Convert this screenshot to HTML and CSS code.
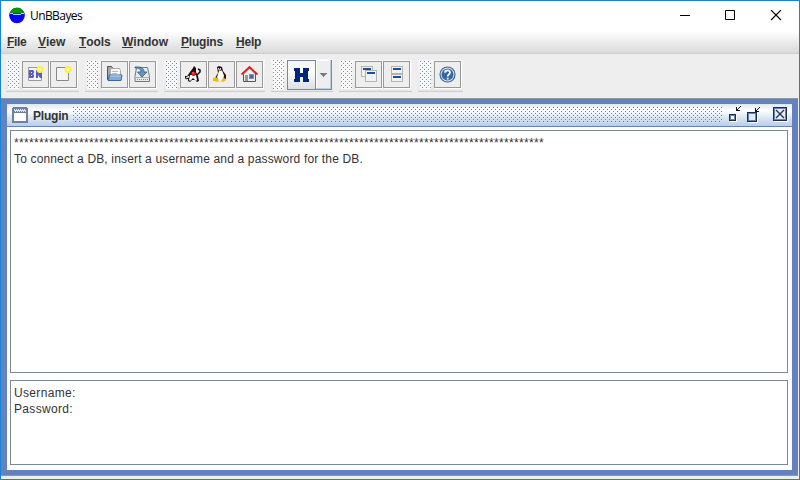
FILE: index.html
```html
<!DOCTYPE html>
<html lang="en">
<head>
<meta charset="utf-8">
<title>UnBBayes</title>
<link rel="stylesheet" href="styles.css">
</head>
<body>
<svg class="defs" width="0" height="0"><defs>
  <pattern id="bumps-grey" width="4" height="4" patternUnits="userSpaceOnUse"><path d="M0 0h1v1H0zM2 2h1v1H2z" fill="#7a8a99"/></pattern>
  <pattern id="bumps-blue" width="4" height="4" patternUnits="userSpaceOnUse"><path d="M0 0h1v1H0zM2 2h1v1H2z" fill="#5479cc"/></pattern>
</defs></svg>
<div class="window">
  <header class="titlebar">
    <svg class="logo" width="18" height="18" viewBox="0 0 18 18"><circle cx="8" cy="8.500" r="7.800" fill="#00f"/><path d="M.9 6.500C2 2.500 4.500.7 8 .7s6 1.800 7.100 5.800z" fill="#009a00"/><path d="M1 6.500h3M12 6.500h3M4 7.500h8" fill="none" stroke="#e0f8ff" stroke-width=".8"/></svg>
    <span class="app-name">UnBBayes</span>
    <svg class="controls" width="104" height="12" viewBox="0 0 104 12"><path d="M0 5.500h10" stroke="#000"/><path d="M45.500.5h9v9h-9z" fill="none" stroke="#000"/><path d="M91 0l10 10M101 0L91 10" stroke="#000" stroke-width="1.100"/></svg>
  </header>
  <nav class="menubar">
    <span class="m-file"><u>F</u>ile</span><span class="m-view"><u>V</u>iew</span><span class="m-tools"><u>T</u>ools</span><span class="m-window"><u>W</u>indow</span><span class="m-plugins"><u>P</u>lugins</span><span class="m-help"><u>H</u>elp</span>
  </nav>
  <div class="toolbars">
    <div class="toolbar">
      <svg class="grip"><rect width="100%" height="100%" fill="url(#bumps-grey)"/></svg>
      <button><svg width="17" height="17" viewBox="0 0 17 17"><path d="M1.500 1.500h13v13h-13z" fill="#f5f5f3" stroke="#999"/><path d="M2 4h4l1 1v2L6 8l1 1v2l-1 1H2zM9 4h2l2 3V4h2v8h-2l-2-3v3H9z" fill="#5c5ad0"/><path d="M4 6h1v1H4zM4 9h1v1H4z" fill="#fff"/><circle cx="13" cy="3.500" r="3.500" fill="#ffef3c"/><circle cx="13" cy="3.500" r="1.500" fill="#fffbb0"/></svg></button>
      <button><svg width="17" height="17" viewBox="0 0 17 17"><path d="M1.500 1.500h12v13h-12z" fill="#f4f4f2" stroke="#888"/><circle cx="13" cy="3.500" r="3.500" fill="#ffef3c"/><circle cx="13" cy="3.500" r="1.500" fill="#fffbb0"/></svg></button>
    </div>
    <div class="toolbar">
      <svg class="grip"><rect width="100%" height="100%" fill="url(#bumps-grey)"/></svg>
      <button><svg width="17" height="17" viewBox="0 0 17 17"><path d="M1.500 13.500v-13h4l1.500 2h3v10z" fill="#a8a8a4" stroke="#555"/><path d="M4.500 2.500h9l1 2v6h-10z" fill="#f8f8f8" stroke="#aaa"/><path d="M6 5.500h6M6 7.500h5" stroke="#bbb"/><path d="M3.500 9h12.500l-1 5.500H2z" fill="#82abd7" stroke="#3569a5"/><path d="M4 10h11" stroke="#bed5ed"/></svg></button>
      <button><svg width="17" height="17" viewBox="0 0 17 17"><path d="M2.500 1.500h11l2 9v5H1v-5z" fill="#e9e9e7" stroke="#777"/><path d="M1.500 11.500h14" stroke="#aaa"/><path d="M3 13.500h11" stroke="#888" stroke-dasharray="1 1"/><path d="M1 1c5-.5 9 .5 9 5h3L8 11 3.500 6H7c0-3-2-4-6-4z" fill="#6598bd" stroke="#285e87" stroke-width=".8"/></svg></button>
    </div>
    <div class="toolbar">
      <svg class="grip"><rect width="100%" height="100%" fill="url(#bumps-grey)"/></svg>
      <button><svg width="17" height="17" viewBox="0 0 17 17"><path d="M9 0l2 2v4l2 4 1 5-2 1-2-2H7l-2 2-2-1V9L5 6l3-4z" fill="#111"/><path d="M5 9h6l1 5-1 1-3-3-3 3-1-1z" fill="#fff"/><path d="M4 9L1 11l-1-1 1 3 3-1" fill="#eee" stroke="#111"/><path d="M12 9l3-3V4l-2-1" fill="none" stroke="#111" stroke-width="1.500"/><circle cx="8.500" cy="7.800" r="2.300" fill="#e61414"/><circle cx="8" cy="7" r=".7" fill="#ff9b91"/></svg></button>
      <button><svg width="17" height="17" viewBox="0 0 17 17"><path d="M4 1l2-1 3 1 1 4 3 4v4l-3 1H4L2.500 11 5 7z" fill="#181818"/><path d="M6 5l3-.5 2 5-1 5H5.500L4 11z" fill="#fff"/><path d="M5 2h1v1H5zM7 2h1v1H7z" fill="#ddd"/><path d="M5 3h3v1L6 5zM0 12l3-1 3 3-1 2-5-1zM9 13l2-1 2 1v1l-3 2-2-.5z" fill="#f8b914"/></svg></button>
      <button><svg width="17" height="17" viewBox="0 0 17 17"><path d="M2.500 8L8.500 2l6 6v7.500h-12z" fill="#efeeea" stroke="#555"/><path d="M4 9h3v6H4z" fill="#999990"/><path d="M8.500 8.500h4v4h-4z" fill="#416db1" stroke="#888"/><path d="M.5 8.500L8.500 1l8 7.500" fill="none" stroke="#df171e" stroke-width="1.700"/></svg></button>
    </div>
    <div class="toolbar split">
      <svg class="grip"><rect width="100%" height="100%" fill="url(#bumps-grey)"/></svg>
      <button class="primary"><svg width="15" height="14" viewBox="0 0 15 14" shape-rendering="crispEdges"><path d="M0 0h6v5h3V0h6v3h-1v8h1v3H9V9H6v5H0v-3h1V3H0z" fill="#00247b"/></svg></button><button class="drop"><svg width="7" height="4" viewBox="0 0 7 4" shape-rendering="crispEdges"><path d="M0 0h7v1H6v1H5v1H4v1H3V3H2V2H1V1H0z" fill="#6f7f8f"/></svg></button>
    </div>
    <div class="toolbar">
      <svg class="grip"><rect width="100%" height="100%" fill="url(#bumps-grey)"/></svg>
      <button><svg width="17" height="17" viewBox="0 0 17 17" shape-rendering="crispEdges"><path d="M1.500.5h11v10h-11z" fill="#f2f2f0" stroke="#b4b4ac"/><path d="M3 2h8v2H3z" fill="#1f4f9c"/><path d="M5.500 4.500h11v11h-11z" fill="#f2f2f0" stroke="#b4b4ac"/><path d="M7 6h8v2H7z" fill="#1f4f9c"/></svg></button>
      <button><svg width="17" height="17" viewBox="0 0 17 17" shape-rendering="crispEdges"><path d="M3.500.5h11v7h-11zM3.500 8.500h11v7h-11z" fill="#f2f2f0" stroke="#b4b4ac"/><path d="M5 2h8v2H5zM5 10h8v2H5z" fill="#1f4f9c"/></svg></button>
    </div>
    <div class="toolbar">
      <svg class="grip"><rect width="100%" height="100%" fill="url(#bumps-grey)"/></svg>
      <button><svg width="17" height="17" viewBox="0 0 17 17"><circle cx="8.500" cy="8.500" r="7.500" fill="#e5edf5" stroke="#416796" stroke-width="1.200"/><circle cx="8.500" cy="8.500" r="6" fill="#3969a5"/><path d="M6 6.700C6 3.500 11 3.600 11 6.500c0 2-2.300 1.800-2.300 4M8.700 11.700v1.700" fill="none" stroke="#fff" stroke-width="1.800"/></svg></button>
    </div>
  </div>
  <main class="desktop">
    <section class="frame">
      <header class="frame-title">
        <svg width="16" height="16" viewBox="0 0 16 16" shape-rendering="crispEdges"><rect x="1" y="1" width="14" height="14" fill="#fff" stroke="#6f8294" stroke-width="2"/><path d="M2 2h12v3H2z" fill="#dde8f3"/><path d="M3 2.500h11M2 4.500h11" stroke="#6382bf" stroke-dasharray="1 1"/><path d="M2 5.500h12" stroke="#6f8294"/><path d="M0 0h1v1H0zM15 0h1v1h-1z" fill="#dde8f3"/></svg>
        <span class="frame-name">Plugin</span>
        <svg class="dots"><rect width="100%" height="100%" fill="url(#bumps-blue)"/></svg>
        <svg class="frame-controls" width="60" height="17" viewBox="0 0 60 17" shape-rendering="crispEdges"><path d="M2 15.500h7M8.500 9v7M20 16.500h10M29.500 7v9M46 15.500h14M59.500 2v14" stroke="#fff"/><path d="M1.500 8.500h6v6h-6z" fill="#fff" stroke="#222c40"/><path d="M2.500 9.500h4v4h-4z" fill="none" stroke="#6382bf"/><path d="M19.500 6.500h9v9h-9z" fill="#e4edf6" stroke="#222c40"/><path d="M20.500 7.500h7v7h-7z" fill="none" stroke="#6382bf"/><path d="M8 1h1v3h3v1H8zM9 3h1v1H9zM10 2h1v1h-1zM11 1h1v1h-1zM12 0h1v1h-1zM27 2h1v3h3v1h-4zM28 4h1v1h-1zM29 3h1v1h-1zM30 2h1v1h-1zM31 1h1v1h-1z" fill="#111"/><path d="M45.500 1.500h13v13h-13z" fill="#e4edf6" stroke="#222c40"/><path d="M46.500 2.500h11v11h-11z" fill="none" stroke="#6382bf"/><path d="M48 4l8 8M56 4l-8 8" stroke="#233050" stroke-width="1.300" shape-rendering="auto"/></svg>
      </header>
      <div class="frame-body">
        <div class="pane log"><p class="stars">**********************************************************************************************************</p><p class="message">To connect a DB, insert a username and a password for the DB.</p></div>
        <div class="pane form"><p>Username:</p><p>Password:</p></div>
      </div>
    </section>
  </main>
</div>
</body>
</html>
```
FILE: styles.css
```css
* { box-sizing: border-box; }
body { margin: 0; overflow: hidden; font: 12px/16px "Liberation Sans", Arial, sans-serif; color: #333; }
p { margin: 0; white-space: pre; }
svg { display: block; flex: none; }
.window { width: 800px; height: 480px; border: 1px solid #1883d7; background: #eee; display: flex; flex-direction: column; }

.titlebar { height: 30px; background: #fff; display: flex; align-items: flex-start; padding: 6px 15px 0 8px; flex: none; }
.app-name { margin: 1px auto 0 3px; font: 12px/16px "Open Sans", sans-serif; color: #000; letter-spacing: -.58px; }
.controls { margin-top: 3px; }

.menubar { height: 23px; flex: none; background: linear-gradient(#fff, #dadada); border-bottom: 1px solid #ccc; display: flex; padding: 3px 0 0 6px; font-weight: bold; }
.menubar u { text-decoration: none; display: inline-block; height: 14px; line-height: 16px; border-bottom: 1px solid #333; }
.m-file { width: 31px; letter-spacing: -.3px; }
.m-view { width: 41px; }
.m-tools { width: 43px; letter-spacing: -.1px; }
.m-window { width: 59px; }
.m-plugins { width: 55px; letter-spacing: -.2px; }
.m-help { letter-spacing: -.2px; }

.toolbars { height: 44px; flex: none; display: flex; gap: 6px; padding: 6px 0 0 5px; }
.toolbar { height: 32px; border-bottom: 1px solid #ccc; background: linear-gradient(#f7f7f7, #e8e8e8); display: flex; align-items: flex-start; gap: 1px; padding: 1px 2px 0; }
.grip { width: 11px; height: 28px; margin-right: 2px; background: #fafafa; }
.toolbar button { width: 27px; height: 27px; padding: 0; border: 1px solid #999; background: #eee; box-shadow: 1px 1px #fff; display: flex; align-items: center; justify-content: center; }
.split { height: 33px; margin-top: -1px; gap: 0; padding-right: 1px; }
.split .grip { height: 30px; margin-right: 3px; }
.toolbar .primary { width: 29px; height: 30px; border-color: #7a8a99; background: linear-gradient(#f1f5fa, #fff 35%, #dedede); box-shadow: none; }
.toolbar .drop { width: 16px; height: 30px; border: 0; border-right: 1px solid #7a8a99; border-bottom: 1px solid #7a8a99; background: #eee; box-shadow: inset -1px -1px #b8cfe5, inset 1px 1px #fff; }

.desktop { flex: 1; display: flex; padding: 0 1px 3px 0; }
.frame { flex: 1; display: flex; flex-direction: column; border: 1px solid #8e979e; border-width: 1px 0; }
.frame-title, .frame-body { border-left: 6px solid #6382bf; border-right: 6px solid #6382bf; }
.frame-title { height: 28px; flex: none; display: flex; align-items: flex-start; padding: 3px 4px 0 5px; border-bottom: 1px solid #6382bf; border-top: 5px solid #6382bf; background: linear-gradient(#dde8f3, #fff 30%, #dde8f3 60%, #b8cfe5) padding-box; }
.frame-name { margin: 1px 5px 0; font-weight: bold; width: 35px; letter-spacing: -.2px; }
.dots { flex: 1; width: 0; height: 15px; }
.frame-controls { margin-left: 5px; margin-top: -1px; }
.frame-body { flex: 1; display: flex; flex-direction: column; gap: 7px; padding: 3px 4px 5px 3px; background: #fff; border-bottom: 5px solid #6382bf; }
.pane { border: 1px solid #7a8a99; padding: 4px 3px; }
.log { height: 243px; }
.form { flex: 1; letter-spacing: .33px; }
.stars { letter-spacing: .33px; }
.message { letter-spacing: .155px; }
.defs { position: absolute; }
```
